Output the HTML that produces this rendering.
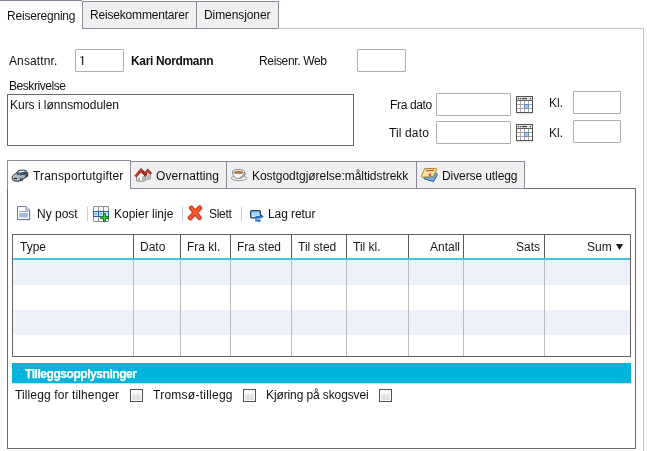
<!DOCTYPE html>
<html><head><meta charset="utf-8">
<style>
*{margin:0;padding:0;box-sizing:border-box}
html,body{width:647px;height:451px;overflow:hidden;background:#fff}
body{position:relative;font-family:"Liberation Sans",sans-serif;font-size:12px;color:#111}
.a{position:absolute}
.t{position:absolute;white-space:nowrap;line-height:14px;font-size:12px;will-change:transform}
.tab{position:absolute;background:#f0f0f0;border:1px solid #878d9b}
.inp{position:absolute;background:#fff;border:1px solid #abaeb4;border-radius:1px}
.vl{position:absolute;width:1px}
.hl{position:absolute;height:1px}
.sep{position:absolute;width:1px;height:14px;background:#c5cdd3;top:207px}
.cb{position:absolute;width:13px;height:13px;border:1px solid #4e4e4e;background:#fff}
.cb::after{content:"";position:absolute;left:1px;top:1px;width:9px;height:9px;background:linear-gradient(#fdfdfd 0%,#f6f6f6 25%,#e6e6e6 45%,#dedede 100%)}
.th{position:absolute;top:240px;white-space:nowrap;line-height:14px;font-size:12px;color:#1a1a1a;will-change:transform}
</style></head><body>

<!-- top tabs -->
<div class="hl" style="left:0;top:0;width:82px;background:#80889a"></div>
<div class="tab" style="left:82px;top:1px;width:115px;height:28px"></div>
<div class="tab" style="left:196px;top:1px;width:83px;height:28px"></div>
<div class="hl" style="left:278px;top:28px;width:366px;background:#c6c6c6"></div>
<div class="vl" style="left:643px;top:28px;height:423px;background:#c6c6c6"></div>
<span class="t" style="left:7px;top:9px;letter-spacing:-0.2px">Reiseregning</span>
<span class="t" style="left:90px;top:8px;letter-spacing:-0.18px">Reisekommentarer</span>
<span class="t" style="left:204px;top:8px;letter-spacing:-0.09px">Dimensjoner</span>

<!-- form row 1 -->
<span class="t" style="left:9px;top:54px;letter-spacing:0.12px">Ansattnr.</span>
<div class="inp" style="left:75px;top:49px;width:49px;height:23px"></div>
<svg class="a" style="left:79px;top:55px" width="6" height="11" viewBox="0 0 6 11"><path d="M3.6 1V10" stroke="#2a2a2a" stroke-width="1.3"/><path d="M1 2.6L3.6 1.4" stroke="#555" stroke-width="1"/></svg>
<span class="t" style="left:131px;top:54px;font-weight:bold;letter-spacing:-0.35px">Kari Nordmann</span>
<span class="t" style="left:259px;top:54px;letter-spacing:-0.35px">Reisenr. Web</span>
<div class="inp" style="left:357px;top:49px;width:49px;height:23px"></div>

<span class="t" style="left:9px;top:79px;letter-spacing:-0.45px">Beskrivelse</span>
<div class="a" style="left:7px;top:94px;width:347px;height:52px;border:1px solid #6a6a6a"></div>
<span class="t" style="left:10px;top:98px;letter-spacing:-0.02px">Kurs i lønnsmodulen</span>

<span class="t" style="left:390px;top:98px;letter-spacing:-0.35px">Fra dato</span>
<div class="inp" style="left:436px;top:93px;width:75px;height:23px"></div>
<span class="t" style="left:389px;top:126px;letter-spacing:0.13px">Til dato</span>
<div class="inp" style="left:436px;top:121px;width:75px;height:23px"></div>
<span class="t" style="left:549px;top:96px">Kl.</span>
<div class="inp" style="left:573px;top:91px;width:48px;height:23px"></div>
<span class="t" style="left:549px;top:126px">Kl.</span>
<div class="inp" style="left:573px;top:120px;width:48px;height:23px"></div>

<!-- calendar icons -->
<svg class="a" style="left:516px;top:96px" width="18" height="19" viewBox="0 0 18 19">
 <rect x="1" y="17" width="16" height="1.5" fill="#000" opacity=".1"/>
 <rect x="0.5" y="0.5" width="16" height="16" fill="#fff" stroke="#505050"/>
 <rect x="1" y="1" width="15" height="3" fill="#e9e9e9"/>
 <path d="M1 4.5H16" stroke="#5e5e5e"/>
 <rect x="2" y="2" width="1.2" height="1.2" fill="#333"/><rect x="4" y="2" width="1.2" height="1.2" fill="#333"/>
 <rect x="6" y="2" width="5" height="1.2" fill="#444"/><rect x="13.8" y="2" width="1.2" height="1.2" fill="#333"/>
 <path d="M1 8.5H16M1 12.5H16M4.5 5V16M8.5 5V16M12.5 5V16" stroke="#a9a9a9" fill="none"/>
 <rect x="8.5" y="8.5" width="4" height="4" fill="#b3c6e2" stroke="#6a8bbf"/>
</svg>
<svg class="a" style="left:516px;top:124px" width="18" height="19" viewBox="0 0 18 19">
 <rect x="1" y="17" width="16" height="1.5" fill="#000" opacity=".1"/>
 <rect x="0.5" y="0.5" width="16" height="16" fill="#fff" stroke="#505050"/>
 <rect x="1" y="1" width="15" height="3" fill="#e9e9e9"/>
 <path d="M1 4.5H16" stroke="#5e5e5e"/>
 <rect x="2" y="2" width="1.2" height="1.2" fill="#333"/><rect x="4" y="2" width="1.2" height="1.2" fill="#333"/>
 <rect x="6" y="2" width="5" height="1.2" fill="#444"/><rect x="13.8" y="2" width="1.2" height="1.2" fill="#333"/>
 <path d="M1 8.5H16M1 12.5H16M4.5 5V16M8.5 5V16M12.5 5V16" stroke="#a9a9a9" fill="none"/>
 <rect x="8.5" y="8.5" width="4" height="4" fill="#b3c6e2" stroke="#6a8bbf"/>
</svg>

<!-- inner panel -->
<div class="a" style="left:7px;top:188px;width:629px;height:261px;border:1px solid #6b6b6b"></div>
<!-- inner tabs -->
<div class="a" style="left:7px;top:160px;width:124px;height:29px;border:1px solid #878d9b;border-bottom:none;background:#fff"></div>
<div class="tab" style="left:130px;top:161px;width:97px;height:28px"></div>
<div class="tab" style="left:226px;top:161px;width:191px;height:28px"></div>
<div class="tab" style="left:416px;top:161px;width:109px;height:28px"></div>
<div class="a" style="left:8px;top:188px;width:122px;height:1px;background:#fff"></div>

<span class="t" style="left:33px;top:169px;letter-spacing:0.17px">Transportutgifter</span>
<span class="t" style="left:156px;top:169px;letter-spacing:0.1px">Overnatting</span>
<span class="t" style="left:252px;top:169px;letter-spacing:-0.04px">Kostgodtgjørelse:måltidstrekk</span>
<span class="t" style="left:442px;top:169px;letter-spacing:-0.09px">Diverse utlegg</span>


<!-- tab icons -->
<svg class="a" style="left:11px;top:168px" width="18" height="15" viewBox="0 0 18 15">
 <defs><linearGradient id="cb" x1="0" y1="0" x2="0.5" y2="1"><stop offset="0" stop-color="#e4eaf0"/><stop offset="1" stop-color="#8c9cac"/></linearGradient></defs>
 <path d="M1.2 9.2 C1.2 7.8 2.5 6.6 5 5.6 L7 2.8 C7.5 2.4 8 2.3 9 2.3 L13 2.1 C14.5 2.1 16 3 16.7 4.5 L16.8 7.5 C16.5 8.3 15.5 9 14 9.8 L10.5 12 C9.5 12.8 8 13.3 6.5 13.3 L2.8 12.8 C1.8 12.4 1.2 11.5 1.2 10.5 Z" fill="url(#cb)" stroke="#2a2f35" stroke-width="1"/>
 <path d="M7.6 3 L13 2.7 L14.2 3.4 L12.8 4.4 L8.4 4.7 Z" fill="#eef3f8"/>
 <path d="M5.2 5.8 L7.4 3.1 L8.6 4.7 L8.3 6.9 L6 7.3 Z" fill="#4a6682"/>
 <path d="M8.8 4.7 L14.2 3.5 L16.3 4.7 L15.8 6.6 L8.6 7.5 Z" fill="#2f455b"/>
 <path d="M11.8 4.2 L11.6 7.2" stroke="#7d8fa2" stroke-width=".6"/>
 <path d="M2.6 10.2 L6 10.6" stroke="#2b2b2b" stroke-width="1.1"/>
 <circle cx="6.9" cy="11.6" r=".7" fill="#fff"/>
 <circle cx="10.4" cy="11.7" r="1.4" fill="#1c1c1c"/><circle cx="10.4" cy="11.7" r=".5" fill="#d8d8d8"/>
 <circle cx="15.5" cy="7.9" r="1.2" fill="#1c1c1c"/><circle cx="15.5" cy="7.9" r=".45" fill="#d8d8d8"/>
</svg>
<svg class="a" style="left:134px;top:167px" width="18" height="16" viewBox="0 0 18 16">
 <path d="M11 7 L13.5 4.5 L16.5 7 V11.8 L12.5 12.6 L11 11.8 Z" fill="#e6e6e6" stroke="#7a7a7a" stroke-width=".8"/>
 <path d="M12.8 12.6 L16.5 11.8 L16.5 7.2 L12.8 9.4 Z" fill="#b5b5b5"/>
 <path d="M9.8 6.8 L13.7 1.8 L17.7 6 L16.3 7.6 L13.6 4.8 L11.2 8 Z" fill="#c23a26" stroke="#8a1e12" stroke-width=".6"/>
 <path d="M2.5 8.5 L6.8 4 L11 8.5 V13.8 L7.5 14.4 L2.5 13.8 Z" fill="#fbfbfb" stroke="#6e6e6e" stroke-width=".8"/>
 <path d="M11 8.5 V13.8 L7.8 14.4 V9.6 Z" fill="#b8b8b8"/>
 <path d="M0.9 8.6 L7 1.4 L13 7.5 L11.3 9.5 L7 5 L2.4 10.2 Z" fill="#c43a24" stroke="#861c10" stroke-width=".7"/>
 <path d="M7.2 1.8 L13 7.5 L11.3 9.5 L8.6 6.6 Z" fill="#a42c1a"/>
 <rect x="4.2" y="10.6" width="1.8" height="3.2" fill="#a0a0a0"/>
</svg>
<svg class="a" style="left:230px;top:168px" width="18" height="14" viewBox="0 0 18 14">
 <ellipse cx="9" cy="10.2" rx="7.7" ry="2.4" fill="#f6f6f6" stroke="#8c8c8c" stroke-width=".9"/>
 <path d="M13.6 4.6 C16 4.4 16.2 7.6 12.8 8.3" fill="none" stroke="#7c7c7c" stroke-width=".9"/>
 <path d="M2.6 3.6 C2.6 8.3 4.6 10.5 8.6 10.5 C12.6 10.5 14.6 8.3 14.6 3.6 Z" fill="#fbfbfb" stroke="#777" stroke-width=".9"/>
 <ellipse cx="8.6" cy="3.6" rx="6" ry="2.2" fill="#fff" stroke="#808080" stroke-width=".9"/>
 <ellipse cx="8.6" cy="4" rx="4.4" ry="1.3" fill="#b8742c"/>
 <path d="M9.5 9.6 C11.5 9.3 12.8 8 13.4 6.2" fill="none" stroke="#9aa3ac" stroke-width="1.2"/>
</svg>
<svg class="a" style="left:420px;top:167px" width="18" height="16" viewBox="0 0 18 16">
 <path d="M3.5 10.5 L15.5 5.2 L17.4 7.6 L13.6 14.6 L4.5 12 Z" fill="#6ea8de" stroke="#1f4f86" stroke-width=".9" stroke-linejoin="round"/>
 <path d="M4.6 1.6 L15.8 1.4 C16.7 1.6 16.9 2.3 16.5 3 L13.2 9.6 L2.2 10.2 C1.4 10 1.2 9.3 1.6 8.6 Z" fill="#f3e3a0" stroke="#a8882a" stroke-width="1" stroke-linejoin="round"/>
 <path d="M5.8 3.7 L14 3.4" stroke="#c9403a" stroke-width="1.1"/>
 <circle cx="10" cy="7.8" r="1.3" fill="#dd3b32"/>
</svg>

<!-- toolbar icons -->
<svg class="a" style="left:16px;top:205px" width="16" height="16" viewBox="0 0 16 16">
 <path d="M1.5 1.5 H10 L13.5 5 V14.5 H1.5 Z" fill="#7c8aa8" opacity=".35" transform="translate(1 1)"/>
 <path d="M1.5 1.5 H10 L13.5 5 V14.5 H1.5 Z" fill="#fff" stroke="#6676a0" stroke-width="1"/>
 <path d="M10 1.5 V5 H13.5" fill="#dfe7f5" stroke="#6676a0" stroke-width=".8"/>
 <rect x="3" y="6" width="9" height="1" fill="#8b9fce"/>
 <rect x="3" y="8" width="9" height="4.5" fill="#a8b9df"/>
</svg>
<svg class="a" style="left:93px;top:206px" width="17" height="17" viewBox="0 0 17 17">
 <path d="M0.5 0.5H15.5V15.5H0.5Z M5.5 0.5V15.5 M10.5 0.5V15.5 M0.5 5.5H15.5 M0.5 10.5H15.5" fill="#fff" stroke="#8a8e94" stroke-width="1"/>
 <rect x="2.5" y="2.5" width="1" height="1" fill="#cfe0f4"/><rect x="7.5" y="2.5" width="1" height="1" fill="#cfe0f4"/><rect x="12.5" y="2.5" width="1" height="1" fill="#cfe0f4"/>
 <rect x="0.5" y="5.5" width="15" height="5" fill="#cde4fa" stroke="#1d62b0" stroke-width="1"/>
 <path d="M5.5 5.5V10.5 M10.5 5.5V10.5" stroke="#1d62b0"/>
 <rect x="2" y="7" width="2" height="2" fill="#6fb3f0"/><rect x="7" y="7" width="2" height="2" fill="#6fb3f0"/>
 <path d="M7.5 10.5 H10.5 V7.5 H12.5 V10.5 H15.5 V12.5 H12.5 V15.5 H10.5 V12.5 H7.5 Z" fill="#45c23f" stroke="#16741a" stroke-width="1"/>
</svg>
<svg class="a" style="left:187px;top:205px" width="17" height="17" viewBox="0 0 17 17">
 <path d="M4.5 3.5 L12.5 13 M13 3 L3.5 13" stroke="#000" stroke-opacity=".15" stroke-width="4.6" stroke-linecap="round" transform="translate(1 1)"/>
 <path d="M4.3 3 L12.3 12.6 M12.8 2.6 L3 12.8" stroke="#c32d14" stroke-width="4.6" stroke-linecap="round"/>
 <path d="M4.3 3 L12.3 12.6 M12.8 2.6 L3 12.8" stroke="#f45a32" stroke-width="2.8" stroke-linecap="round"/>
</svg>
<svg class="a" style="left:249px;top:209px" width="16" height="15" viewBox="0 0 16 15">
 <defs><linearGradient id="mg" x1="0" y1="0" x2="0" y2="1"><stop offset="0" stop-color="#8ec2ee"/><stop offset="1" stop-color="#d2eafc"/></linearGradient></defs>
 <rect x="1.6" y="1.6" width="9.8" height="7.2" rx="1.4" fill="url(#mg)" stroke="#153f6c" stroke-width="1.2"/>
 <path d="M6.5 7 H11.6 V4.6 L14.8 7.4 L11.6 10 V8.8 H7 Z" fill="#2a78c2"/>
 <path d="M6.2 9.2 V12.6 H9.4 V13.8 L12.2 11.6 L9.4 9.6 V10.8 H7.8 V9.2 Z" fill="#2a78c2"/>
</svg>

<!-- toolbar -->
<span class="t" style="left:37px;top:207px;letter-spacing:0px">Ny post</span>
<div class="sep" style="left:87px"></div>
<span class="t" style="left:114px;top:207px;letter-spacing:0px">Kopier linje</span>
<div class="sep" style="left:182px"></div>
<span class="t" style="left:209px;top:207px;letter-spacing:-0.3px">Slett</span>
<div class="sep" style="left:241px"></div>
<span class="t" style="left:268px;top:207px;letter-spacing:-0.08px">Lag retur</span>

<!-- table -->
<div class="a" style="left:12px;top:234px;width:619px;height:123px;border:1px solid #646464;background:#fff"></div>
<div class="a" style="left:13px;top:258px;width:617px;height:2px;background:#3ec1e2"></div>
<div class="a" style="left:13px;top:260px;width:617px;height:25px;background:#edf2fa"></div>
<div class="a" style="left:13px;top:310px;width:617px;height:25px;background:#edf2fa"></div>
<!-- header dividers -->
<div class="vl" style="left:133px;top:235px;height:23px;background:#5a5a5a"></div>
<div class="vl" style="left:180px;top:235px;height:23px;background:#5a5a5a"></div>
<div class="vl" style="left:230px;top:235px;height:23px;background:#5a5a5a"></div>
<div class="vl" style="left:291px;top:235px;height:23px;background:#5a5a5a"></div>
<div class="vl" style="left:346px;top:235px;height:23px;background:#5a5a5a"></div>
<div class="vl" style="left:408px;top:235px;height:23px;background:#5a5a5a"></div>
<div class="vl" style="left:463px;top:235px;height:23px;background:#5a5a5a"></div>
<div class="vl" style="left:544px;top:235px;height:23px;background:#5a5a5a"></div>
<!-- body dividers -->
<div class="vl" style="left:133px;top:260px;height:96px;background:#bcbcbc"></div>
<div class="vl" style="left:180px;top:260px;height:96px;background:#bcbcbc"></div>
<div class="vl" style="left:230px;top:260px;height:96px;background:#bcbcbc"></div>
<div class="vl" style="left:291px;top:260px;height:96px;background:#bcbcbc"></div>
<div class="vl" style="left:346px;top:260px;height:96px;background:#bcbcbc"></div>
<div class="vl" style="left:408px;top:260px;height:96px;background:#bcbcbc"></div>
<div class="vl" style="left:463px;top:260px;height:96px;background:#bcbcbc"></div>
<div class="vl" style="left:544px;top:260px;height:96px;background:#bcbcbc"></div>

<span class="th" style="left:20px">Type</span>
<span class="th" style="left:140px">Dato</span>
<span class="th" style="left:187px">Fra kl.</span>
<span class="th" style="left:237px">Fra sted</span>
<span class="th" style="left:298px">Til sted</span>
<span class="th" style="left:353px">Til kl.</span>
<span class="th" style="left:430px">Antall</span>
<span class="th" style="left:516px">Sats</span>
<span class="th" style="left:587px">Sum</span>
<svg class="a" style="left:616px;top:244px" width="7" height="6" viewBox="0 0 7 6"><path d="M0 0H7L3.5 6Z" fill="#1a1a1a"/></svg>

<!-- bar -->
<div class="a" style="left:12px;top:363px;width:619px;height:20px;background:#00b4dc"></div>
<div class="a" style="left:12px;top:383px;width:619px;height:1px;background:#e3d6d6"></div>
<span class="t" style="left:25px;top:367px;color:#fff;font-weight:bold;letter-spacing:-0.45px;-webkit-text-stroke:0.25px #fff">Tilleggsopplysninger</span>

<!-- checkboxes -->
<span class="t" style="left:15px;top:388px;letter-spacing:0.12px">Tillegg for tilhenger</span>
<div class="cb" style="left:130px;top:389px"></div>
<span class="t" style="left:153px;top:388px;letter-spacing:0.25px">Tromsø-tillegg</span>
<div class="cb" style="left:243px;top:389px"></div>
<span class="t" style="left:266px;top:388px;letter-spacing:-0.11px">Kjøring på skogsvei</span>
<div class="cb" style="left:379px;top:389px"></div>

</body></html>
